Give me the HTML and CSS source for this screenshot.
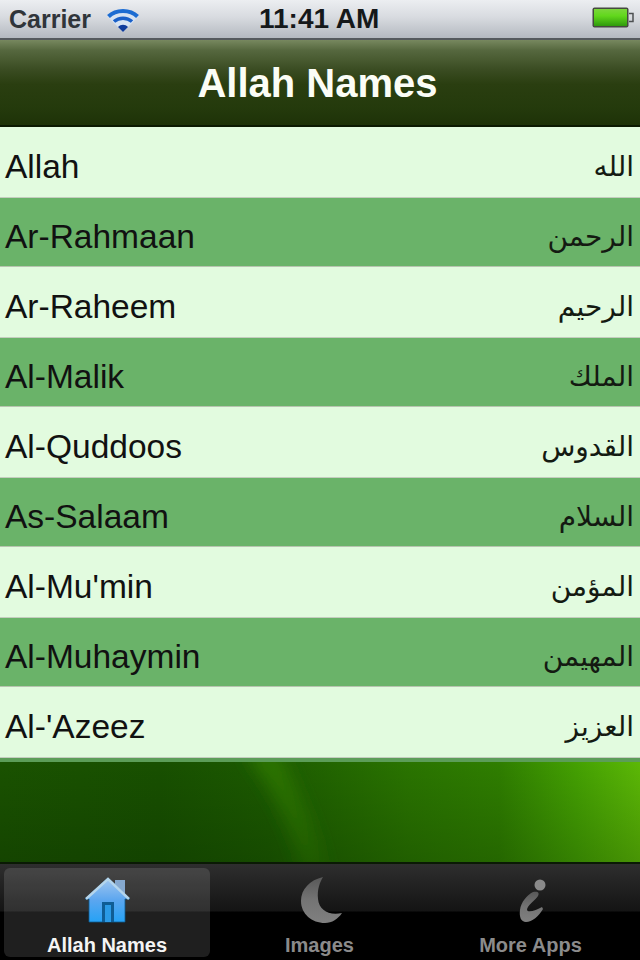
FILE: index.html
```html
<!DOCTYPE html>
<html lang="en">
<head>
    <meta charset="UTF-8">
    <title>Allah Names</title>
    <link rel="stylesheet" href="styles.css">
</head>
<body>
<div class="phone">
    <div class="status-bar">
        <div class="status-left">
            <span class="carrier">Carrier</span>
            <svg class="wifi" width="32" height="24" viewBox="0 0 32 24">
                <path d="M0 8C8 -1 24 -1 32 8L16 24Z" fill="#d7e3f2"/>
                <path d="M1.500 8.500C9 1 23 1 30.500 8.500" fill="none" stroke="#1c6cd2" stroke-width="4"/>
                <path d="M7 13.500C12 9 20 9 25 13.500" fill="none" stroke="#1a60c8" stroke-width="3.500"/>
                <path d="M11 19C14 16 18 16 21 19L16 24Z" fill="#103c9c"/>
            </svg>
        </div>
        <span class="clock">11:41 AM</span>
        <svg class="battery" width="42" height="22" viewBox="0 0 42 22">
            <defs>
                <linearGradient id="batteryFill" x1="0" y1="0" x2="0" y2="1">
                    <stop offset="0" stop-color="#7bd63c"/>
                    <stop offset="0.400" stop-color="#62d81c"/>
                    <stop offset="1" stop-color="#2f9a0c"/>
                </linearGradient>
            </defs>
            <rect x="0.500" y="0.500" width="36" height="20" rx="2" fill="#45493f"/>
            <rect x="2" y="2" width="33" height="17" fill="url(#batteryFill)"/>
            <path d="M37 6.500H41V14.500H37" fill="none" stroke="#4d5052" stroke-width="1.500"/>
        </svg>
    </div>

    <div class="nav-bar">
        <h1>Allah Names</h1>
    </div>

    <div class="name-list">
        <div class="name-row"><span>Allah</span><span class="arabic" lang="ar" dir="rtl">الله</span></div>
        <div class="name-row"><span>Ar-Rahmaan</span><span class="arabic" lang="ar" dir="rtl">الرحمن</span></div>
        <div class="name-row"><span>Ar-Raheem</span><span class="arabic" lang="ar" dir="rtl">الرحيم</span></div>
        <div class="name-row"><span>Al-Malik</span><span class="arabic" lang="ar" dir="rtl">الملك</span></div>
        <div class="name-row"><span>Al-Quddoos</span><span class="arabic" lang="ar" dir="rtl">القدوس</span></div>
        <div class="name-row"><span>As-Salaam</span><span class="arabic" lang="ar" dir="rtl">السلام</span></div>
        <div class="name-row"><span>Al-Mu'min</span><span class="arabic" lang="ar" dir="rtl">المؤمن</span></div>
        <div class="name-row"><span>Al-Muhaymin</span><span class="arabic" lang="ar" dir="rtl">المهيمن</span></div>
        <div class="name-row"><span>Al-'Azeez</span><span class="arabic" lang="ar" dir="rtl">العزيز</span></div>
    </div>

    <div class="banner">
        <svg class="banner-art" width="640" height="100" viewBox="0 0 640 100">
            <defs>
                <filter id="soft" x="-50%" y="-20%" width="200%" height="140%">
                    <feGaussianBlur stdDeviation="8"/>
                </filter>
                <linearGradient id="streakFade" x1="0" y1="0" x2="0" y2="1">
                    <stop offset="0" stop-color="#317c08" stop-opacity="0.800"/>
                    <stop offset="1" stop-color="#317c08" stop-opacity="0.200"/>
                </linearGradient>
            </defs>
            <path d="M245 -10H280C295 25 315 60 328 110H300C292 65 270 25 245 -10Z" fill="url(#streakFade)" filter="url(#soft)"/>
        </svg>
    </div>

    <div class="tab-bar">
        <div class="tab active">
            <svg width="48" height="50" viewBox="0 0 48 50">
                <defs>
                    <linearGradient id="houseFill" x1="0" y1="0" x2="0" y2="1">
                        <stop offset="0" stop-color="#a3c8ef"/>
                        <stop offset="0.500" stop-color="#5ca6ef"/>
                        <stop offset="1" stop-color="#25a2f6"/>
                    </linearGradient>
                    <linearGradient id="tabGrey" x1="0" y1="0" x2="0" y2="1">
                        <stop offset="0" stop-color="#585858"/>
                        <stop offset="0.500" stop-color="#747474"/>
                        <stop offset="1" stop-color="#808080"/>
                    </linearGradient>
                </defs>
                <path d="M32 5H42V20L32 12Z" fill="#86a9cf"/>
                <path d="M2 24L25 3L47 24H42V47H6V24Z" fill="url(#houseFill)" stroke="#0e5a90" stroke-width="0.800"/>
                <path d="M3 24L25 4L46 24" fill="none" stroke="#b4d5ec" stroke-width="2.500"/>
                <path d="M19 47V27H31V47Z" fill="#0f5d95"/>
                <path d="M22 47V30H28V47Z" fill="#2a9ae6"/>
            </svg>
            <span>Allah Names</span>
        </div>
        <div class="tab">
            <svg width="48" height="50" viewBox="0 0 48 50">
                <path d="M27 2C14 5 5 14 5 26C5 39 16 48 29 48C36 48 42 44 46 38C33 41 23 35 22 24C21 14 24 7 27 2Z" fill="url(#tabGrey)"/>
            </svg>
            <span>Images</span>
        </div>
        <div class="tab tab-last">
            <svg width="48" height="50" viewBox="0 0 48 50">
                <ellipse cx="33" cy="10" rx="5.500" ry="5.500" fill="#8a8a8a"/>
                <path d="M26 17C30 16 33 17 31 21C28 26 20 30 20 35C21 38 30 35 35 32L36 34C32 41 25 47 19 47C14 47 12 42 13 35C14 27 20 20 26 17Z" fill="url(#tabGrey)"/>
            </svg>
            <span>More Apps</span>
        </div>
    </div>
</div>
</body>
</html>
```

FILE: styles.css
```css
html, body {
    margin: 0;
    padding: 0;
}
body {
    font-family: "Liberation Sans", Arial, sans-serif;
    background: #000;
}
.phone {
    width: 640px;
    height: 960px;
    display: flex;
    flex-direction: column;
    overflow: hidden;
}

.status-bar {
    height: 40px;
    flex: none;
    box-sizing: border-box;
    display: flex;
    align-items: center;
    justify-content: space-between;
    padding: 0 6px 0 9px;
    position: relative;
    background: linear-gradient(#eceef1, #d8dbe0 45%, #b4b9c0);
    border-bottom: 2px solid #555a5e;
}
.status-left {
    display: flex;
    align-items: center;
    gap: 16px;
}
.carrier {
    font-size: 25px;
    font-weight: bold;
    color: #30353a;
}
.wifi {
    margin-top: 1px;
}
.clock {
    position: absolute;
    left: 259px;
    font-size: 28px;
    font-weight: bold;
    color: #15181a;
}
.battery {
    margin-top: -2px;
}

.nav-bar {
    height: 87px;
    flex: none;
    box-sizing: border-box;
    display: flex;
    align-items: center;
    justify-content: center;
    padding: 2px 5px 0 0;
    background: linear-gradient(#77885f, #56683f 12%, #3a4c22 35%, #2a3e10 52%, #243a0c 80%, #1e3208);
    border-bottom: 2px solid #0c1a02;
}
.nav-bar h1 {
    margin: 0;
    font-size: 40px;
    font-weight: bold;
    color: #fbfdf6;
}

.name-row {
    height: 71px;
    box-sizing: border-box;
    display: flex;
    align-items: center;
    justify-content: space-between;
    padding: 9px 6px 0 5px;
    font-size: 33.5px;
    color: #111;
    background: #e2fbdf;
    border-bottom: 1px solid #c5cdbf;
}
.name-row:nth-child(even) {
    height: 69px;
    background: #6ab369;
    border-bottom-color: #b8c4b0;
}
.arabic {
    font-family: "DejaVu Sans", sans-serif;
    font-size: 28px;
    color: #141a12;
}

.banner {
    flex: 1;
    overflow: hidden;
    border-top: 4px solid #5c9d58;
    border-bottom: 2px solid #0a1a04;
    background:
        linear-gradient(rgba(0, 0, 0, 0), rgba(0, 20, 0, 0.22)),
        linear-gradient(90deg, #1a5200, #185000 25%, #1c5a00 42%, #2a7400 64%, #2f7e00 78%, #44a002 90%, #5cb806);
}
.banner-art {
    display: block;
}

.tab-bar {
    height: 96px;
    flex: none;
    display: flex;
    padding: 4px 0 3px 4px;
    box-sizing: border-box;
    background: linear-gradient(#2e2e2e, #141414 49%, #000 50%);
}
.tab {
    flex: 1;
    display: flex;
    flex-direction: column;
    align-items: center;
    padding-top: 7px;
    font-size: 20px;
    font-weight: bold;
    color: #8b8b8b;
}
.tab span {
    margin-top: 9px;
}
.tab-last {
    padding-right: 4px;
}
.tab.active {
    flex: none;
    width: 206px;
    margin-right: 4px;
    border-radius: 6px;
    color: #f4f4f4;
    background: rgba(255, 255, 255, 0.12);
}
```
